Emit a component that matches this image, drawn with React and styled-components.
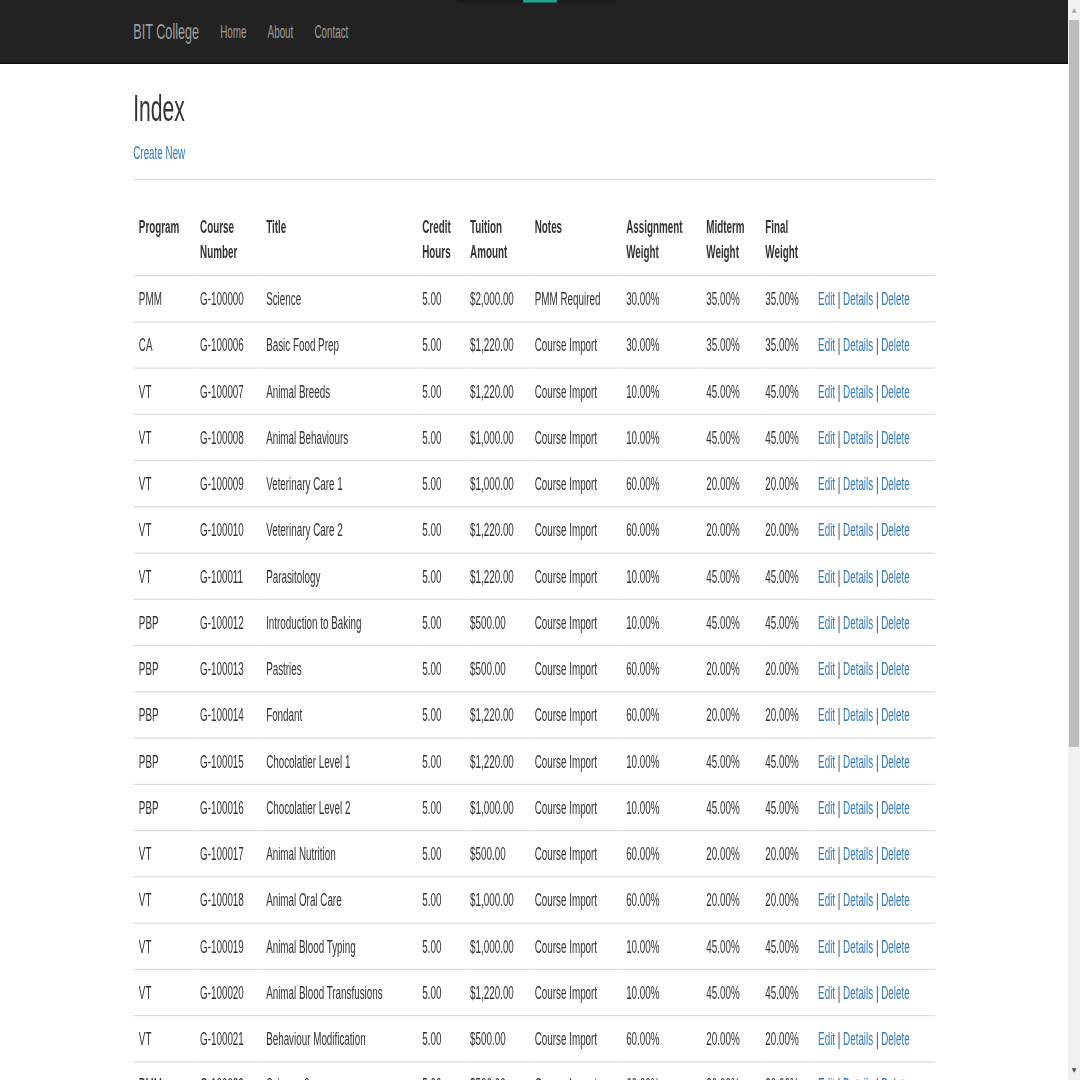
import React from "react";
import styled, { createGlobalStyle } from "styled-components";

const Global = createGlobalStyle`
  html, body { margin: 0; padding: 0; overflow: hidden; background: #fff; }
  * { box-sizing: border-box; }
`;

const Screen = styled.div`
  display: flex;
  width: 1080px;
  height: 1080px;
  overflow: hidden;
`;

const Viewport = styled.div`
  width: 1068px;
  height: 1080px;
  overflow: hidden;
  position: relative;
`;

/* The reference is a 1536x864 capture stretched to 1080x1080 */
const Stretch = styled.div`
  width: 1519px;
  transform: scale(0.703125, 1.25);
  transform-origin: 0 0;
  font-family: "Liberation Sans", Arial, Helvetica, sans-serif;
  font-size: 14px;
  line-height: 1.42857;
  color: #333;
`;

const Navbar = styled.header`
  position: relative;
  height: 51px;
  background: #222;
  border-bottom: 1px solid #080808;
`;

const TopStrip = styled.div`
  position: absolute;
  top: 0;
  left: 650px;
  width: 227px;
  height: 1.5px;
  background: #1a1a1a;
`;

const TopMarker = styled.div`
  position: absolute;
  top: 0;
  left: 744px;
  width: 48px;
  height: 1.5px;
  background: #1fa592;
`;

const Container = styled.div`
  width: 1170px;
  margin: 0 auto;
  padding: 0 15px;
`;

const NavInner = styled(Container)`
  display: flex;
  align-items: flex-start;
  height: 50px;
`;

const Brand = styled.a`
  font-size: 18px;
  line-height: 20px;
  padding: 15px 15px;
  margin-left: -15px;
  height: 50px;
  color: #9d9d9d;
  text-decoration: none;
`;

const NavList = styled.ul`
  display: flex;
  list-style: none;
  margin: 0;
  padding: 0;
`;

const NavLink = styled.a`
  display: block;
  padding: 15px;
  line-height: 20px;
  color: #9d9d9d;
  text-decoration: none;
`;

const Title = styled.h2`
  font-size: 30px;
  font-weight: 500;
  line-height: 1.1;
  margin: 19px 0 10px;
  color: #333;
`;

const Para = styled.p`
  margin: 0;
`;

const Link = styled.a`
  color: #337ab7;
  text-decoration: none;
`;

const Rule = styled.hr`
  margin: 10px 0 19px;
  border: 0;
  border-top: 1px solid #ddd;
`;

const Table = styled.table`
  width: 100%;
  table-layout: fixed;
  border-collapse: collapse;
  border-spacing: 0;
`;

const Th = styled.th`
  width: ${(p) => p.$w}px;
  text-align: left;
  font-weight: bold;
  vertical-align: top;
  padding: 8px 8px 9px;
  line-height: 20px;
  border-bottom: 1px solid #ddd;
`;

const Td = styled.td`
  padding: 8px;
  line-height: 20px;
  vertical-align: top;
  border-top: 1px solid #ddd;
  white-space: nowrap;
`;

const ScrollBar = styled.div`
  width: 12px;
  height: 1080px;
  background: #f1f1f1;
  display: flex;
  flex-direction: column;
  align-items: center;
`;

const Arrow = styled.div`
  height: 20px;
  width: 12px;
  display: flex;
  align-items: center;
  justify-content: center;
  color: ${(p) => p.$color};
  font-size: 6px;
  line-height: 1;
  font-family: "DejaVu Sans", sans-serif;
`;

const Thumb = styled.div`
  width: 10px;
  height: 727px;
  background: #bdbdbd;
`;

const Spacer = styled.div`
  flex: 1;
`;

const cols = [
  ["Program", 87],
  ["Course Number", 94],
  ["Title", 222],
  ["Credit Hours", 68],
  ["Tuition Amount", 92],
  ["Notes", 130],
  ["Assignment Weight", 114],
  ["Midterm Weight", 84],
  ["Final Weight", 75],
  ["", 174],
];

const rows = [
  ["PMM", "G-100000", "Science", "$2,000.00", "PMM Required", "30.00%", "35.00%", "35.00%"],
  ["CA", "G-100006", "Basic Food Prep", "$1,220.00", "Course Import", "30.00%", "35.00%", "35.00%"],
  ["VT", "G-100007", "Animal Breeds", "$1,220.00", "Course Import", "10.00%", "45.00%", "45.00%"],
  ["VT", "G-100008", "Animal Behaviours", "$1,000.00", "Course Import", "10.00%", "45.00%", "45.00%"],
  ["VT", "G-100009", "Veterinary Care 1", "$1,000.00", "Course Import", "60.00%", "20.00%", "20.00%"],
  ["VT", "G-100010", "Veterinary Care 2", "$1,220.00", "Course Import", "60.00%", "20.00%", "20.00%"],
  ["VT", "G-100011", "Parasitology", "$1,220.00", "Course Import", "10.00%", "45.00%", "45.00%"],
  ["PBP", "G-100012", "Introduction to Baking", "$500.00", "Course Import", "10.00%", "45.00%", "45.00%"],
  ["PBP", "G-100013", "Pastries", "$500.00", "Course Import", "60.00%", "20.00%", "20.00%"],
  ["PBP", "G-100014", "Fondant", "$1,220.00", "Course Import", "60.00%", "20.00%", "20.00%"],
  ["PBP", "G-100015", "Chocolatier Level 1", "$1,220.00", "Course Import", "10.00%", "45.00%", "45.00%"],
  ["PBP", "G-100016", "Chocolatier Level 2", "$1,000.00", "Course Import", "10.00%", "45.00%", "45.00%"],
  ["VT", "G-100017", "Animal Nutrition", "$500.00", "Course Import", "60.00%", "20.00%", "20.00%"],
  ["VT", "G-100018", "Animal Oral Care", "$1,000.00", "Course Import", "60.00%", "20.00%", "20.00%"],
  ["VT", "G-100019", "Animal Blood Typing", "$1,000.00", "Course Import", "10.00%", "45.00%", "45.00%"],
  ["VT", "G-100020", "Animal Blood Transfusions", "$1,220.00", "Course Import", "10.00%", "45.00%", "45.00%"],
  ["VT", "G-100021", "Behaviour Modification", "$500.00", "Course Import", "60.00%", "20.00%", "20.00%"],
  ["PMM", "G-100022", "Science 2", "$500.00", "Course Import", "60.00%", "20.00%", "20.00%"],
];

function renderHead(label) {
  const parts = label.split(" ");
  return parts.map((p, i) => (
    <React.Fragment key={i}>
      {p}
      {i < parts.length - 1 && <br />}
    </React.Fragment>
  ));
}

export default function App() {
  return (
    <>
      <Global />
      <Screen>
        <Viewport>
          <Stretch>
            <Navbar>
              <TopStrip />
              <TopMarker />
              <NavInner>
                <Brand href="#">BIT College</Brand>
                <NavList>
                  <li><NavLink href="#">Home</NavLink></li>
                  <li><NavLink href="#">About</NavLink></li>
                  <li><NavLink href="#">Contact</NavLink></li>
                </NavList>
              </NavInner>
            </Navbar>
            <Container>
              <Title>Index</Title>
              <Para>
                <Link href="#">Create New</Link>
              </Para>
              <Rule />
              <Table>
                <thead>
                  <tr>
                    {cols.map(([label, w], i) => (
                      <Th key={i} $w={w}>{renderHead(label)}</Th>
                    ))}
                  </tr>
                </thead>
                <tbody>
                  {rows.map((r) => (
                    <tr key={r[1]}>
                      <Td>{r[0]}</Td>
                      <Td>{r[1]}</Td>
                      <Td>{r[2]}</Td>
                      <Td>5.00</Td>
                      <Td>{r[3]}</Td>
                      <Td>{r[4]}</Td>
                      <Td>{r[5]}</Td>
                      <Td>{r[6]}</Td>
                      <Td>{r[7]}</Td>
                      <Td>
                        <Link href="#">Edit</Link> | <Link href="#">Details</Link> |{" "}
                        <Link href="#">Delete</Link>
                      </Td>
                    </tr>
                  ))}
                </tbody>
              </Table>
            </Container>
          </Stretch>
        </Viewport>
        <ScrollBar>
          <Arrow $color="#a3a3a3">▲</Arrow>
          <Thumb />
          <Spacer />
          <Arrow $color="#505050">▼</Arrow>
        </ScrollBar>
      </Screen>
    </>
  );
}
